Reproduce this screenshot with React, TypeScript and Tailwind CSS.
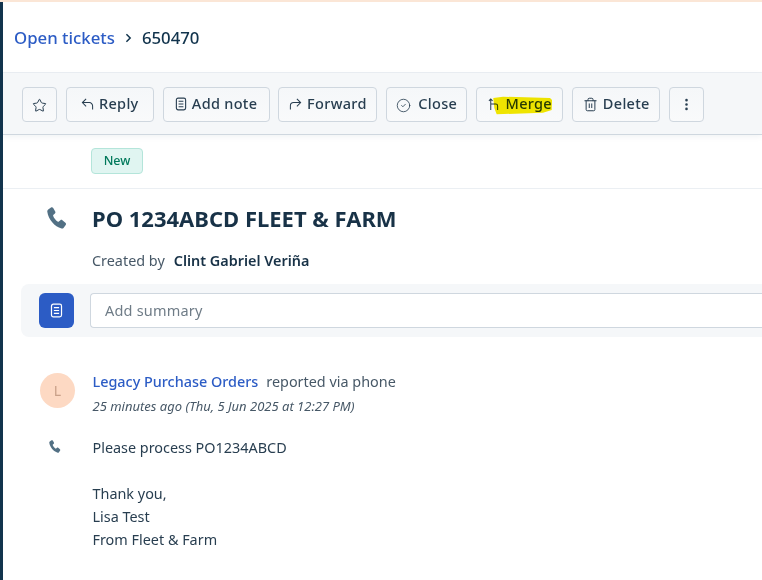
import { ReactNode } from "react";
import { Star, CircleCheck, Trash2, EllipsisVertical } from "lucide-react";

const NoteIcon = ({ className = "" }: { className?: string }) => (
    <svg viewBox="0 0 14 16" className={className} fill="none" stroke="currentColor" strokeWidth="1.3">
        <rect x="1.6" y="1.2" width="10.8" height="13.6" rx="2" />
        <path d="M4.2 4.8h5.6M4.2 8h5.6M4.2 11.2h5.6" />
    </svg>
);

const PhoneIcon = ({ className = "" }: { className?: string }) => (
    <svg viewBox="0 0 20 22" className={className} fill="currentColor">
        <path d="M1.2 2.6 4 .5c.8-.5 1.7-.3 2.2.5l2 3.4c.4.7.3 1.5-.3 2L6.500 7.700c-.4.3-.5.8-.3 1.300.9 2.300 2.400 4.200 4.400 5.500.4.300.9.200 1.300-.1l1.500-1.200c.6-.5 1.400-.5 2 0l3 2.500c.7.600.8 1.500.3 2.200l-2 2.800c-.5.700-1.300 1-2.100.8C7.500 19.500 1.500 12.500.3 4.700c-.1-.8.300-1.600.9-2.100z" />
    </svg>
);

const ReplyIcon = () => (
    <svg viewBox="0 0 14 14" className="w-[13px] h-[14px]" fill="none" stroke="currentColor" strokeWidth="1.1">
        <path d="M5.500 1.500 1.500 5.500l4 4M1.500 5.500H9a3.500 3.500 0 0 1 3.500 3.500v4" />
    </svg>
);

const ForwardIcon = () => (
    <svg viewBox="0 0 14 14" className="w-[13px] h-[14px]" fill="none" stroke="currentColor" strokeWidth="1.1">
        <path d="M8.500 1.500l4 4-4 4M12.500 5.500H5A3.500 3.500 0 0 0 1.500 9v4" />
    </svg>
);

const MergeIcon = () => (
    <svg viewBox="0 0 12 14" className="w-[11px] h-[13px] mr-[2px]" fill="none" stroke="currentColor" strokeWidth="1.1">
        <path d="M1 3 3 1l2 2M3 1v12M3 6.500h5.500a2 2 0 0 1 2 2V13" />
    </svg>
);

const ToolButton = ({ icon, label, width }: { icon: ReactNode; label?: string; width: string }) => (
    <button className={`${width} h-[35px] shrink-0 flex items-center justify-center gap-[5px] rounded-[4px] border border-[#cfd7df] bg-gradient-to-b from-[#f5f7f9] to-[#f9fafb] text-[#283e50] text-[14.5px] font-medium tracking-[0.3px]`}>
        {icon}
        {label && <span>{label}</span>}
    </button>
);

export default function App() {
    return (
        <div className="relative w-[762px] h-[580px] overflow-hidden bg-white text-[#12344d] font-['Noto_Sans','Open_Sans',sans-serif]">
            <div className="h-[2px] bg-[#fbe6d6]" />
            <div className="flex h-[578px]">
                <div className="w-[3px] shrink-0 bg-[#12344d]" />
                <main className="flex-1 min-w-0">
                    {/* breadcrumb */}
                    <div className="h-[71px] pl-[11px] pt-[1px] flex items-center text-[16.800px] font-medium border-b border-[#ebeff3]">
                        <a className="text-[#2c5cc5]">Open tickets</a>
                        <svg viewBox="0 0 8 12" className="w-[7px] h-[10px] ml-[10px] mr-[10px] text-[#12344d]" fill="none" stroke="currentColor" strokeWidth="1.800">
                            <path d="M1.500 1.500 6 6l-4.500 4.500" />
                        </svg>
                        <span>650470</span>
                    </div>

                    {/* toolbar */}
                    <div className="relative h-[62px] pl-[19px] pt-[1px] flex items-center gap-[8.800px] bg-[#f5f7f9] border-b border-[#cfd7df] shadow-[0_2px_6px_rgba(18,52,77,0.06)]">
                        <ToolButton width="w-[35px]" icon={<Star className="w-[15px] h-[15px] mt-[2px]" strokeWidth={1.600} />} />
                        <ToolButton width="w-[88px]" label="Reply" icon={<ReplyIcon />} />
                        <ToolButton width="w-[107px]" label="Add note" icon={<NoteIcon className="w-[12px] h-[14px]" />} />
                        <ToolButton width="w-[99px]" label="Forward" icon={<ForwardIcon />} />
                        <ToolButton width="w-[81px]" label="Close" icon={<CircleCheck className="w-[15px] h-[15px] mt-[2px] mr-[2px]" strokeWidth={1.300} />} />
                        <ToolButton width="w-[87.500px]" label="Merge" icon={<MergeIcon />} />
                        <ToolButton width="w-[88px]" label="Delete" icon={<Trash2 className="w-[15px] h-[15px]" strokeWidth={1.600} />} />
                        <ToolButton width="w-[35px]" icon={<EllipsisVertical className="w-[15px] h-[15px]" strokeWidth={2.200} />} />
                        {/* marker highlight */}
                        <svg viewBox="0 0 60 19" className="absolute left-[490px] top-[23px] w-[60px] h-[19px] mix-blend-multiply">
                            <polygon points="0.300,2 10,0.700 57,2 59,4 58.700,14 50,16.700 3.700,18.300 1.300,12" fill="#f6ea00" />
                        </svg>
                    </div>

                    {/* status */}
                    <div className="h-[54px] pl-[88px] pt-[13px] border-b border-[#ebeff3]">
                        <span className="w-[52px] h-[26px] flex items-center justify-center rounded-[4px] border border-[#b4e5da] bg-[#e0f5f1] text-[#00795b] text-[12.5px] font-medium">New</span>
                    </div>

                    {/* subject */}
                    <div className="h-[61px] flex items-center pb-[2px]">
                        <PhoneIcon className="w-[20px] h-[22px] ml-[44px] mr-[25px] mb-[1px] text-[#527084]" />
                        <h1 className="text-[22px] font-bold text-[#183247]">PO 1234ABCD FLEET &amp; FARM</h1>
                    </div>
                    <div className="h-[34px] pl-[89px] pb-[12px] flex items-center text-[14.400px] text-[#475867]">
                        Created by
                        <span className="ml-[9px] font-semibold text-[#183247]">Clint Gabriel Veriña</span>
                    </div>

                    {/* summary */}
                    <div className="ml-[18px] h-[53px] pl-[18px] flex items-center gap-[16px] rounded-l-[8px] bg-[#f5f7f9]">
                        <div className="w-[35px] h-[35px] shrink-0 flex items-center justify-center rounded-[6px] bg-[#2c5cc5] text-white">
                            <NoteIcon className="w-[13px] h-[15px]" />
                        </div>
                        <div className="flex-1 h-[35px] pl-[14px] flex items-center rounded-l-[4px] border border-r-0 border-[#cfd7df] bg-white text-[#6f7c87] text-[14.500px] tracking-[0.200px]">
                            Add summary
                        </div>
                    </div>

                    {/* conversation */}
                    <div className="mt-[36px] flex">
                        <div className="w-[89.500px] shrink-0 pl-[37px]">
                            <div className="w-[35px] h-[35px] flex items-center justify-center rounded-full bg-[#fdd9c3] text-[#c9a088] text-[14px]">L</div>
                            <PhoneIcon className="w-[12px] h-[13px] ml-[9px] mt-[32px] text-[#527084]" />
                        </div>
                        <div className="text-[14.400px] leading-[23px]">
                            <div className="-mt-[3px] h-[23px]">
                                <span className="text-[#2c5cc5] font-medium">Legacy Purchase Orders</span>
                                <span className="ml-[8px] text-[#475867]">reported via phone</span>
                            </div>
                            <div className="mt-[2px] text-[13px] italic text-[#475867]">25 minutes ago (Thu, 5 Jun 2025 at 12:27 PM)</div>
                            <div className="mt-[18px] text-[#283e50]">
                                <p>Please process PO1234ABCD</p>
                                <p className="mt-[23px]">Thank you,</p>
                                <p>Lisa Test</p>
                                <p>From Fleet &amp; Farm</p>
                            </div>
                        </div>
                    </div>
                </main>
            </div>
        </div>
    );
}
